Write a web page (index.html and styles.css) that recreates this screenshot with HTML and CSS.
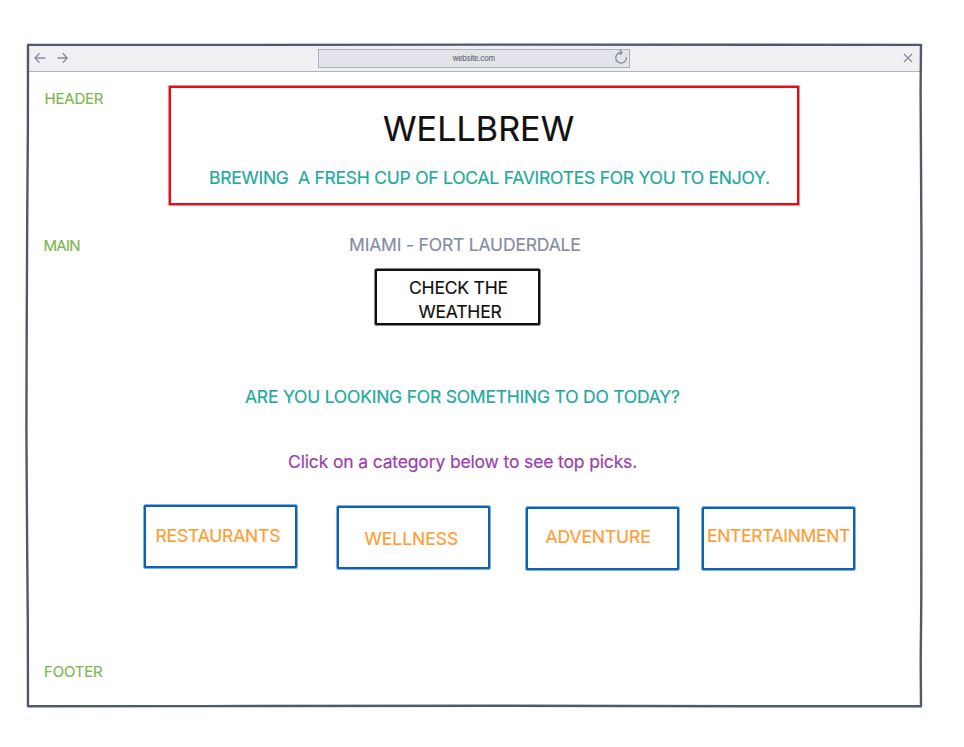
FILE: index.html
```html
<!DOCTYPE html>
<html lang="en">
<head>
<meta charset="utf-8">
<title>Wellbrew</title>
<link rel="stylesheet" href="styles.css">
</head>
<body>
<div class="window">
  <div class="toolbar">
    <svg class="nav" width="36" height="12" viewBox="0 0 36 12"><path d="M11.500 6H1M5.500 1.200 1 6l4.500 4.800M23.500 6H33M28.800 1.200 33.200 6l-4.400 4.800"/></svg>
    <div class="address">
      <span class="url">website.com</span>
      <svg class="reload" width="14" height="16" viewBox="0 0 14 16"><path d="M12.300 8A5.300 5.300 0 1 1 7 3.500M5.600 1l2.500 2.300-2.100 2.500"/></svg>
    </div>
    <svg class="close" width="10" height="10" viewBox="0 0 10 10"><path d="M1 1l8 8M9 1 1 9"/></svg>
  </div>
  <header class="row header">
    <span class="label l-header">HEADER</span>
    <div class="banner">
      <h1><span>WELLBREW</span></h1>
      <p><span class="tagline">BREWING&nbsp; A FRESH CUP OF LOCAL FAVIROTES FOR YOU TO ENJOY.</span></p>
    </div>
  </header>
  <main>
    <div class="row place">
      <span class="label l-main">MAIN</span>
      <span class="city">MIAMI - FORT LAUDERDALE</span>
    </div>
    <button class="weather"><span class="check">CHECK THE</span><span class="wthr">WEATHER</span></button>
    <h2><span>ARE YOU LOOKING FOR SOMETHING TO DO TODAY?</span></h2>
    <p class="hint"><span>Click on a category below to see top picks.</span></p>
    <div class="categories">
      <button class="restaurants"><span>RESTAURANTS</span></button>
      <button class="wellness"><span>WELLNESS</span></button>
      <button class="adventure"><span>ADVENTURE</span></button>
      <button class="entertainment"><span>ENTERTAINMENT</span></button>
    </div>
  </main>
  <footer><span class="label l-footer">FOOTER</span></footer>
  <svg class="frame" width="964" height="747" viewBox="0 0 964 747"><path d="M28 44.900 27.900 125 27.200 220 26.700 330 26.400 430 27.100 540 27.800 620 28 706.200 200 706.100 500 705.800 750 706.300 921 706.200 920.700 660 921.300 600 921.500 250 920.600 90 921 44.900 520 44.600 200 44.900Z"/></svg>
</div>
</body>
</html>
```
FILE: styles.css
```css
* { box-sizing: border-box; }
body { margin: 0; background: #fff; font-family: Inter, "Liberation Sans", sans-serif; }
h1, h2, p { margin: 0; font-weight: 400; }
button { padding: 0; background: none; font: inherit; border-radius: 1px; }
span { white-space: nowrap; }
.window { position: relative; width: 964px; height: 747px; padding: 44px 43px 0 27px; font-size: 17.500px; line-height: 24px; -webkit-text-stroke: .2px; }
.frame { position: absolute; left: 0; top: 0; fill: none; stroke: #50586c; stroke-width: 2.400; stroke-linejoin: round; pointer-events: none; }

.toolbar { display: flex; align-items: flex-start; height: 28px; padding-left: 7px; background: #f0f0f3; border-bottom: 1px solid #b0b3be; }
.toolbar svg { fill: none; stroke: #858c9f; stroke-width: 1.300; }
.nav { margin-top: 8px; }
.address { display: flex; align-items: center; width: 312px; height: 19px; margin: 4.500px 0 0 247.500px; border: 1px solid #adb1bd; background: #e3e4e8; }
.url { margin: 1px 0 0 134px; font-size: 7.500px; line-height: 10px; letter-spacing: -.25px; color: #5f667a; -webkit-text-stroke: .1px; }
.address .reload { margin-left: auto; margin-top: -2px; margin-right: .5px; }
.close { margin: 9px 0 0 273.500px; }

.row { display: flex; }
.label { flex: none; font-size: 15px; line-height: 20px; color: #7fb750; }
.header { height: 134px; padding-top: 14px; }
.l-header { width: 124px; margin: 3px 0 0 17.500px; letter-spacing: -.2px; }
.banner { width: 630px; height: 119px; border: 2px solid #e0101a; box-shadow: 0 0 0 .5px #e0101a; padding-top: 20px; margin-left: .5px; }
h1 { padding-left: 212px; font-size: 34px; line-height: 41px; color: #111; letter-spacing: .1px; -webkit-text-stroke: .2px; }
.banner p { padding: 17px 0 0 38px; color: #22a99a; }
.tagline { letter-spacing: -.25px; }

.place { height: 63px; padding-top: 27px; }
.l-main { width: 305.500px; margin: 3px 0 0 16.500px; letter-spacing: -.7px; }
.city { color: #868d9f; letter-spacing: -.18px; }
.weather { display: flex; flex-direction: column; align-items: flex-start; width: 165px; height: 56px; margin: 0 0 0 348px; padding-top: 5px; border: 2px solid #111; box-shadow: 0 0 0 .5px #111; color: #111; line-height: 24px; letter-spacing: -.2px; }
.check { margin-left: 32px; }
.wthr { margin-left: 41.500px; }
h2 { padding: 60px 0 0 218px; font-size: 17.500px; color: #22a99a; letter-spacing: -.22px; }
.hint { padding: 41px 0 0 261px; color: #9c3ead; letter-spacing: -.15px; }
.categories { display: flex; align-items: flex-start; padding: 31px 0 0 117px; }
.categories button { display: flex; width: 153px; height: 63px; border: 2px solid #0b62b8; box-shadow: 0 0 0 .5px #0b62b8; color: #ff9d34; letter-spacing: -.1px; }
.categories .restaurants { padding: 17px 0 0 9.500px; letter-spacing: -.17px; }
.categories .wellness { margin: 1px 0 0 40px; padding: 19px 0 0 25.500px; letter-spacing: 0; }
.categories .adventure { margin: 2px 0 0 36px; padding: 16px 0 0 17.500px; }
.categories .entertainment { margin: 2px 0 0 23px; padding: 15px 0 0 3px; letter-spacing: -.33px; }
footer { display: flex; padding: 92px 0 0 17px; }
.l-footer { letter-spacing: -.2px; }
```
